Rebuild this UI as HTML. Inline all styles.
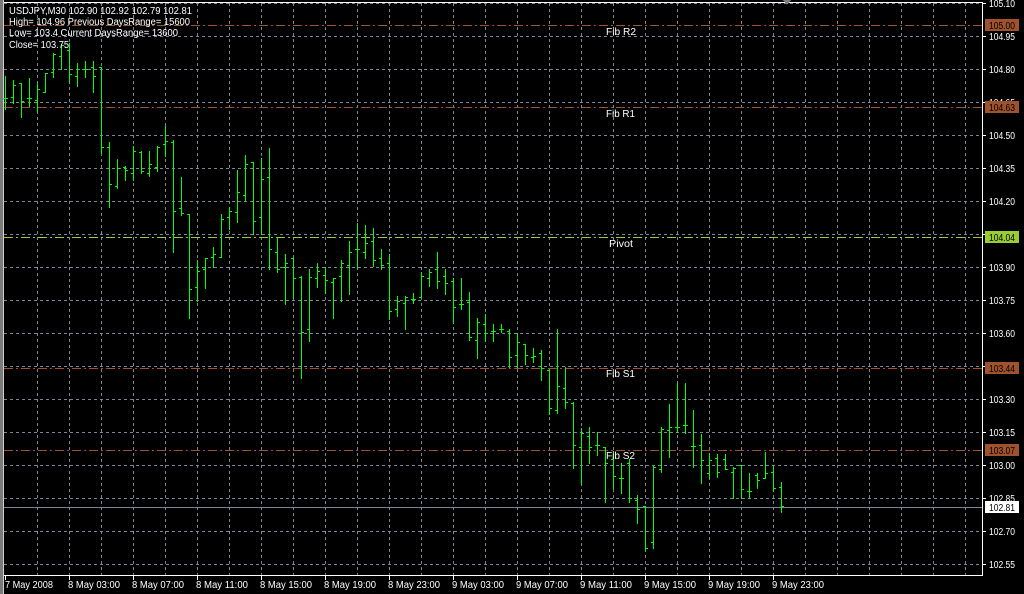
<!DOCTYPE html>
<html><head><meta charset="utf-8"><style>
html,body{margin:0;padding:0;background:#000;width:1024px;height:594px;overflow:hidden}
svg{display:block}
text{font-family:"Liberation Sans",sans-serif}
</style></head><body>
<svg width="1024" height="594" viewBox="0 0 1024 594" xmlns="http://www.w3.org/2000/svg" shape-rendering="crispEdges">
<rect x="0" y="0" width="1024" height="594" fill="#000"/>
<rect x="0" y="0" width="3" height="594" fill="#7a7a7a"/>
<rect x="3" y="0" width="1" height="594" fill="#d4d0c8"/>
<!-- grid horizontal -->
<g stroke="#778899" stroke-width="1" stroke-dasharray="3,3" fill="none">
<path d="M4 3.5H982M4 36.5H982M4 69.5H982M4 102.5H982M4 135.5H982M4 168.5H982M4 201.5H982M4 234.5H982M4 267.5H982M4 300.5H982M4 333.5H982M4 366.5H982M4 399.5H982M4 432.5H982M4 465.5H982M4 498.5H982M4 531.5H982M4 564.5H982"/>
<path d="M37.5 3V575M69.5 3V575M101.5 3V575M133.5 3V575M165.5 3V575M197.5 3V575M229.5 3V575M261.5 3V575M293.5 3V575M325.5 3V575M357.5 3V575M389.5 3V575M421.5 3V575M453.5 3V575M485.5 3V575M517.5 3V575M549.5 3V575M581.5 3V575M613.5 3V575M645.5 3V575M677.5 3V575M709.5 3V575M741.5 3V575M773.5 3V575M805.5 3V575M837.5 3V575M869.5 3V575M901.5 3V575M933.5 3V575M965.5 3V575"/>
</g>
<!-- fib lines -->
<g stroke-width="1" stroke-dasharray="9,3,2,3" fill="none">
<path stroke="#a0522d" d="M4 25.5H982M4 107.5H982M4 368.5H982M4 450.5H982"/>
<path stroke="#9acd32" d="M4 237.5H982"/>
</g>
<path stroke="#778899" d="M4 507.5H982"/>
<!-- bars -->
<path stroke="#00ff00" stroke-width="1" fill="none" d="
M5.5 76V110M3 98.5H5M6 98.5H8
M13.5 80V104M11 97.5H13M14 85.5H16
M21.5 83V118M19 83.5H21M22 101.5H24
M29.5 78V107M27 98.5H29M30 98.5H32
M37.5 84V113M35 100.5H37M38 89.5H40
M45.5 73V93M43 92.5H45M46 73.5H48
M53.5 53V78M51 72.5H53M54 54.5H56
M61.5 44V70M59 56.5H61M62 45.5H64
M69.5 43V83M67 50.5H69M70 74.5H72
M77.5 63V87M75 76.5H77M78 69.5H80
M85.5 61V78M83 69.5H85M86 69.5H88
M93.5 61V93M91 67.5H93M94 76.5H96
M101.5 67V154M99 67.5H101M102 147.5H104
M109.5 142V208M107 147.5H109M110 184.5H112
M117.5 159V189M115 186.5H117M118 168.5H120
M125.5 166V181M123 167.5H125M126 170.5H128
M133.5 146V181M131 173.5H133M134 151.5H136
M141.5 151V174M139 152.5H141M142 171.5H144
M149.5 151V177M147 173.5H149M150 164.5H152
M157.5 146V172M155 167.5H157M158 147.5H160
M165.5 126V157M163 144.5H165M166 141.5H168
M173.5 140V253M171 142.5H173M174 211.5H176
M181.5 177V216M179 208.5H181M182 213.5H184
M189.5 214V319M187 214.5H189M190 289.5H192
M197.5 260V302M195 287.5H197M198 271.5H200
M205.5 258V289M203 269.5H205M206 258.5H208
M213.5 247V268M211 257.5H213M214 254.5H216
M221.5 214V258M219 257.5H221M222 219.5H224
M229.5 207V230M227 217.5H229M230 211.5H232
M237.5 170V223M235 212.5H237M238 192.5H240
M245.5 155V201M243 195.5H245M246 164.5H248
M253.5 162V235M251 162.5H253M254 221.5H256
M261.5 158V235M259 217.5H261M262 179.5H264
M269.5 148V270M267 177.5H269M270 249.5H272
M277.5 237V273M275 252.5H277M278 269.5H280
M285.5 254V305M283 267.5H285M286 263.5H288
M293.5 258V299M291 258.5H293M294 278.5H296
M301.5 276V379M299 277.5H301M302 332.5H304
M309.5 269V342M307 329.5H309M310 277.5H312
M317.5 263V288M315 278.5H317M318 271.5H320
M325.5 267V294M323 275.5H325M326 280.5H328
M333.5 278V319M331 282.5H333M334 278.5H336
M341.5 260V302M339 276.5H341M342 263.5H344
M349.5 241V295M347 265.5H349M350 252.5H352
M357.5 223V269M355 249.5H357M358 249.5H360
M365.5 225V259M363 252.5H365M366 243.5H368
M373.5 228V267M371 241.5H373M374 260.5H376
M381.5 249V270M379 258.5H381M382 265.5H384
M389.5 254V320M387 263.5H389M390 311.5H392
M397.5 296V317M395 309.5H397M398 301.5H400
M405.5 296V330M403 303.5H405M406 297.5H408
M413.5 293V304M411 299.5H413M414 299.5H416
M421.5 272V298M419 297.5H421M422 276.5H424
M429.5 269V287M427 278.5H429M430 272.5H432
M437.5 252V289M435 269.5H437M438 281.5H440
M445.5 269V295M443 276.5H445M446 283.5H448
M453.5 278V324M451 281.5H453M454 307.5H456
M461.5 278V310M459 304.5H461M462 304.5H464
M469.5 292V341M467 302.5H469M470 337.5H472
M477.5 318V359M475 340.5H477M478 322.5H480
M485.5 314V342M483 324.5H485M486 333.5H488
M493.5 324V342M491 331.5H493M494 331.5H496
M501.5 324V333M499 329.5H501M502 329.5H504
M509.5 329V368M507 331.5H509M510 357.5H512
M517.5 333V368M515 355.5H517M518 342.5H520
M525.5 344V365M523 344.5H525M526 355.5H528
M533.5 348V363M531 357.5H533M534 356.5H536
M541.5 350V381M539 353.5H541M542 368.5H544
M549.5 369V415M547 370.5H549M550 408.5H552
M557.5 329V414M555 410.5H557M558 386.5H560
M565.5 367V409M563 388.5H565M566 402.5H568
M573.5 402V469M571 403.5H573M574 445.5H576
M581.5 428V485M579 447.5H581M582 433.5H584
M589.5 427V464M587 436.5H589M590 447.5H592
M597.5 432V456M595 445.5H597M598 445.5H600
M605.5 447V503M603 447.5H605M606 463.5H608
M613.5 451V489M611 459.5H613M614 476.5H616
M621.5 463V494M619 478.5H621M622 478.5H624
M629.5 459V503M627 463.5H629M630 498.5H632
M637.5 495V524M635 500.5H637M638 509.5H640
M645.5 506V551M643 506.5H645M646 548.5H648
M653.5 466V549M651 542.5H653M654 467.5H656
M661.5 427V473M659 469.5H661M662 429.5H664
M669.5 404V458M667 430.5H669M670 427.5H672
M677.5 383V433M675 427.5H677M678 427.5H680
M685.5 383V434M683 425.5H685M686 425.5H688
M693.5 410V468M691 446.5H693M694 446.5H696
M701.5 434V484M699 445.5H701M702 460.5H704
M709.5 453V479M707 473.5H709M710 460.5H712
M717.5 454V478M715 458.5H717M718 472.5H720
M725.5 454V470M723 459.5H725M726 469.5H728
M733.5 467V499M731 472.5H733M734 468.5H736
M741.5 465V499M739 465.5H741M742 489.5H744
M749.5 473V499M747 491.5H749M750 491.5H752
M757.5 473V489M755 475.5H757M758 480.5H760
M765.5 452V479M763 478.5H765M766 473.5H768
M773.5 466V492M771 472.5H773M774 488.5H776
M781.5 482V513M779 487.5H781M782 506.5H784
"/>
<!-- frame -->
<path stroke="#ffffff" fill="none" d="M4 2.5H982.5V575.5H4"/>
<path fill="#808080" d="M783 0L791 0L787 5Z"/>
<!-- right axis ticks -->
<path stroke="#ffffff" d="M982 3.5H986M982 36.5H986M982 69.5H986M982 102.5H986M982 135.5H986M982 168.5H986M982 201.5H986M982 234.5H986M982 267.5H986M982 300.5H986M982 333.5H986M982 366.5H986M982 399.5H986M982 432.5H986M982 465.5H986M982 498.5H986M982 531.5H986M982 564.5H986"/>
<!-- bottom ticks -->
<path stroke="#ffffff" d="M5.5 575V580M69.5 575V580M133.5 575V580M197.5 575V580M261.5 575V580M325.5 575V580M389.5 575V580M453.5 575V580M517.5 575V580M581.5 575V580M645.5 575V580M709.5 575V580M773.5 575V580"/>
<g fill="#ffffff" font-size="10" shape-rendering="auto">
<text x="989" y="7" textLength="26" lengthAdjust="spacingAndGlyphs">105.10</text>
<text x="989" y="40" textLength="26" lengthAdjust="spacingAndGlyphs">104.95</text>
<text x="989" y="73" textLength="26" lengthAdjust="spacingAndGlyphs">104.80</text>
<text x="989" y="106" textLength="26" lengthAdjust="spacingAndGlyphs">104.65</text>
<text x="989" y="139" textLength="26" lengthAdjust="spacingAndGlyphs">104.50</text>
<text x="989" y="172" textLength="26" lengthAdjust="spacingAndGlyphs">104.35</text>
<text x="989" y="205" textLength="26" lengthAdjust="spacingAndGlyphs">104.20</text>
<text x="989" y="238" textLength="26" lengthAdjust="spacingAndGlyphs">104.05</text>
<text x="989" y="271" textLength="26" lengthAdjust="spacingAndGlyphs">103.90</text>
<text x="989" y="304" textLength="26" lengthAdjust="spacingAndGlyphs">103.75</text>
<text x="989" y="337" textLength="26" lengthAdjust="spacingAndGlyphs">103.60</text>
<text x="989" y="370" textLength="26" lengthAdjust="spacingAndGlyphs">103.45</text>
<text x="989" y="403" textLength="26" lengthAdjust="spacingAndGlyphs">103.30</text>
<text x="989" y="436" textLength="26" lengthAdjust="spacingAndGlyphs">103.15</text>
<text x="989" y="469" textLength="26" lengthAdjust="spacingAndGlyphs">103.00</text>
<text x="989" y="502" textLength="26" lengthAdjust="spacingAndGlyphs">102.85</text>
<text x="989" y="535" textLength="26" lengthAdjust="spacingAndGlyphs">102.70</text>
<text x="989" y="568" textLength="26" lengthAdjust="spacingAndGlyphs">102.55</text>
</g>
<!-- price boxes -->
<rect x="985" y="19" width="34" height="12" fill="#a0522d"/>
<rect x="985" y="101" width="34" height="12" fill="#a0522d"/>
<rect x="985" y="231" width="34" height="12" fill="#9acd32"/>
<rect x="985" y="362" width="34" height="12" fill="#a0522d"/>
<rect x="985" y="444" width="34" height="12" fill="#a0522d"/>
<rect x="985" y="501" width="34" height="12" fill="#ffffff"/>
<g fill="#000" font-size="10" shape-rendering="auto">
<text x="989" y="29" textLength="26" lengthAdjust="spacingAndGlyphs">105.00</text>
<text x="989" y="111" textLength="26" lengthAdjust="spacingAndGlyphs">104.63</text>
<text x="989" y="241" textLength="26" lengthAdjust="spacingAndGlyphs">104.04</text>
<text x="989" y="372" textLength="26" lengthAdjust="spacingAndGlyphs">103.44</text>
<text x="989" y="454" textLength="26" lengthAdjust="spacingAndGlyphs">103.07</text>
<text x="989" y="511" textLength="26" lengthAdjust="spacingAndGlyphs">102.81</text>
</g>
<!-- bottom labels -->
<g fill="#ffffff" font-size="10" shape-rendering="auto">
<text x="5" y="588" textLength="48" lengthAdjust="spacingAndGlyphs">7 May 2008</text>
<text x="68" y="588" textLength="52" lengthAdjust="spacingAndGlyphs">8 May 03:00</text>
<text x="132" y="588" textLength="52" lengthAdjust="spacingAndGlyphs">8 May 07:00</text>
<text x="196" y="588" textLength="52" lengthAdjust="spacingAndGlyphs">8 May 11:00</text>
<text x="260" y="588" textLength="52" lengthAdjust="spacingAndGlyphs">8 May 15:00</text>
<text x="324" y="588" textLength="52" lengthAdjust="spacingAndGlyphs">8 May 19:00</text>
<text x="388" y="588" textLength="52" lengthAdjust="spacingAndGlyphs">8 May 23:00</text>
<text x="452" y="588" textLength="52" lengthAdjust="spacingAndGlyphs">9 May 03:00</text>
<text x="516" y="588" textLength="52" lengthAdjust="spacingAndGlyphs">9 May 07:00</text>
<text x="580" y="588" textLength="52" lengthAdjust="spacingAndGlyphs">9 May 11:00</text>
<text x="644" y="588" textLength="52" lengthAdjust="spacingAndGlyphs">9 May 15:00</text>
<text x="708" y="588" textLength="52" lengthAdjust="spacingAndGlyphs">9 May 19:00</text>
<text x="772" y="588" textLength="52" lengthAdjust="spacingAndGlyphs">9 May 23:00</text>
</g>
<!-- fib labels -->
<g fill="#ffffff" font-size="10" shape-rendering="auto">
<text x="606" y="35" textLength="30" lengthAdjust="spacingAndGlyphs">Fib R2</text>
<text x="606" y="117" textLength="29" lengthAdjust="spacingAndGlyphs">Fib R1</text>
<text x="609" y="247" textLength="24" lengthAdjust="spacingAndGlyphs">Pivot</text>
<text x="606" y="377" textLength="29" lengthAdjust="spacingAndGlyphs">Fib S1</text>
<text x="606" y="459" textLength="29" lengthAdjust="spacingAndGlyphs">Fib S2</text>
</g>
<!-- top-left info -->
<g fill="#ffffff" font-size="10" shape-rendering="auto">
<text x="9" y="14" textLength="183" lengthAdjust="spacingAndGlyphs">USDJPY,M30  102.90 102.92 102.79 102.81</text>
<text x="9" y="25" textLength="181" lengthAdjust="spacingAndGlyphs">High= 104.96 Previous DaysRange= 15600</text>
<text x="9" y="36" textLength="169" lengthAdjust="spacingAndGlyphs">Low= 103.4 Current DaysRange= 13600</text>
<text x="9" y="48" textLength="60" lengthAdjust="spacingAndGlyphs">Close= 103.75</text>
</g>
</svg>
</body></html>
